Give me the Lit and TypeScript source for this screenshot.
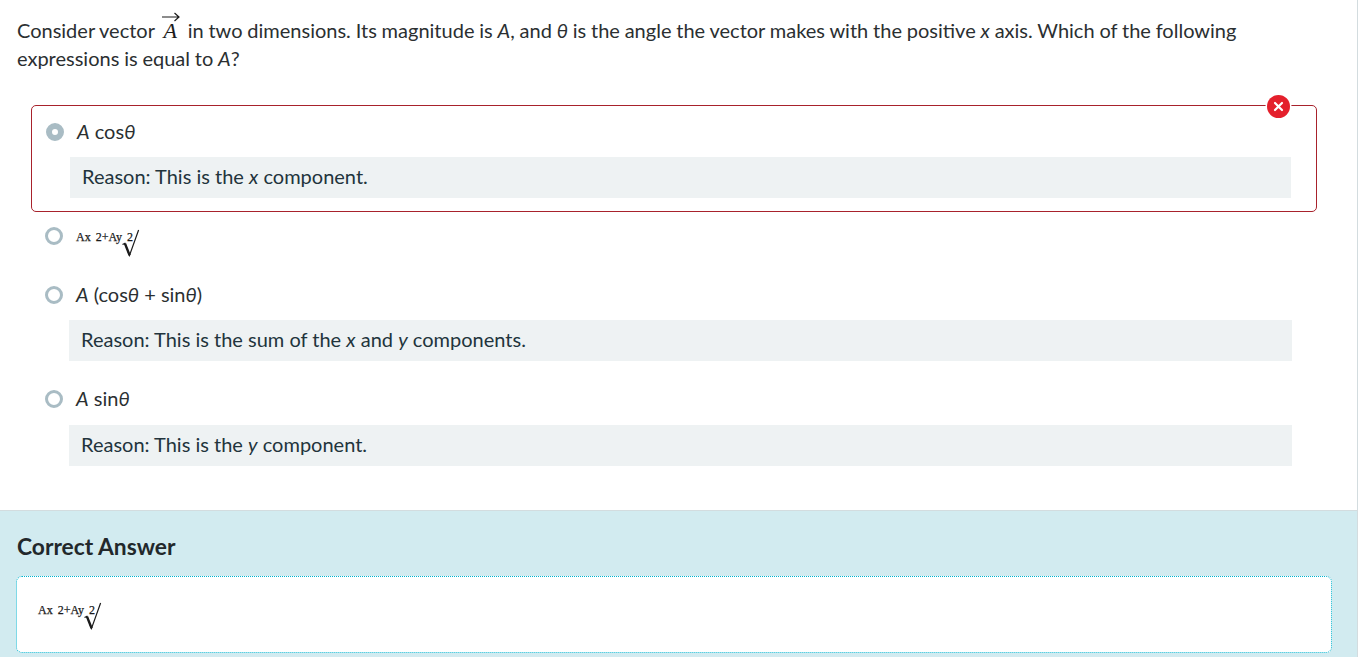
import { LitElement, html, css } from 'lit';
import { customElement, property } from 'lit/decorators.js';

const radical = html`<svg class="radical" width="18" height="28" viewBox="0 0 18 28" aria-hidden="true">
  <path d="M.5 15.5l2.4-1.1 4.6 12L16.6 1" fill="none" stroke="#1b1b1b" stroke-width="1.2" />
  <path d="M3 14.6l4.6 11.6" fill="none" stroke="#1b1b1b" stroke-width="2.4" />
</svg>`;

@customElement('math-root')
export class MathRoot extends LitElement {
  static styles = css`
    :host {
      display: inline-flex;
      align-items: flex-start;
      height: 28px;
      font-family: 'Liberation Serif', serif;
      font-size: 12px;
      line-height: 14px;
      color: #1b1b1b;
      -webkit-text-stroke: 0.25px #1b1b1b;
    }
    .expr {
      white-space: pre;
      word-spacing: 2px;
      padding-top: 2px;
    }
    .radical {
      margin: 1px 0 0 -11px;
    }
  `;

  render() {
    return html`<span class="expr">Ax 2+Ay 2</span>${radical}`;
  }
}

@customElement('answer-option')
export class AnswerOption extends LitElement {
  static styles = css`
    :host {
      display: block;
    }
    .row {
      display: flex;
      align-items: center;
      gap: 13px;
      height: 28px;
    }
    .radio {
      width: 18px;
      height: 18px;
      box-sizing: border-box;
      border-radius: 50%;
      border: 3px solid #a9bcc4;
      background: #fff;
      flex: none;
    }
    .radio--picked {
      border-width: 6.5px;
    }
    .label {
      font-size: 20px;
      line-height: 26px;
      margin-bottom: 2px;
    }
  `;

  @property({ type: Boolean }) picked = false;

  render() {
    return html`
      <div class="row">
        <span class="radio ${this.picked ? 'radio--picked' : ''}"></span>
        <span class="label"><slot></slot></span>
      </div>
    `;
  }
}

@customElement('app-root')
export class AppRoot extends LitElement {
  static styles = css`
    :host {
      display: block;
      width: 1358px;
      box-sizing: border-box;
      border-right: 1px solid #d3dcdf;
      font-family: Lato, 'Open Sans', sans-serif;
      color: #2b2f31;
    }
    .question {
      margin: 0;
      padding: 16px 100px 0 17px;
      height: 105px;
      box-sizing: border-box;
      font-size: 20px;
      line-height: 28px;
      word-spacing: -0.3px;
    }
    .vec {
      display: inline-block;
      position: relative;
      font-family: 'Liberation Serif', serif;
      font-style: italic;
      font-size: 22px;
      line-height: 18px;
      margin: 0 6px 0 4px;
      -webkit-text-stroke: 0.1px #1b1b1b;
      color: #1b1b1b;
    }
    .vec svg {
      position: absolute;
      left: -2px;
      top: -11px;
    }
    .choices {
      padding: 0 41px 44px 31px;
    }
    .wrong {
      position: relative;
      border: 1px solid #a8222c;
      border-radius: 5px;
      height: 107px;
      box-sizing: border-box;
      padding: 12px 25px 0 14px;
      margin-right: -1px;
    }
    .badge {
      position: absolute;
      top: -11px;
      right: 26px;
      width: 23px;
      height: 23px;
      border-radius: 50%;
      background: #e4202c;
      box-shadow: 0 0 0 1.5px #fff;
      display: flex;
      align-items: center;
      justify-content: center;
    }
    .plain {
      padding: 0 24px 0 14px;
    }
    .plain--root {
      padding-top: 10px;
      height: 69px;
      box-sizing: border-box;
    }
    .plain--root math-root {
      position: relative;
      top: 3px;
    }
    .plain--last {
      margin-top: 24px;
    }
    .plain--last .reason {
      margin-top: 12px;
    }
    .reason {
      margin: 11px 0 0 24px;
      background: #eef2f3;
      height: 41px;
      padding: 0 12px;
      font-size: 20px;
      line-height: 38px;
      color: #22343c;
    }
    .answer {
      background: #d2ebf0;
      border-top: 1px solid #d3dcdf;
      height: 147px;
      box-sizing: border-box;
      padding: 21px 25px 0 16px;
    }
    h2 {
      margin: 0 0 16px 1px;
      font-size: 22.8px;
      line-height: 28px;
      font-weight: 700;
      color: #22282b;
    }
    .answer-box {
      background: #fff;
      border: 1px dotted #00b4d0;
      border-radius: 6px;
      height: 77px;
      box-sizing: border-box;
      padding: 21px 21px 0;
    }
  `;

  render() {
    return html`
      <p class="question">
        Consider vector
        <span class="vec"
          ><svg width="20" height="12" viewBox="0 0 20 12" aria-hidden="true">
            <path d="M1 6h17M13.5 2l4.5 4-4.5 4" fill="none" stroke="#1b1b1b" stroke-width="1.2" /></svg
          >A</span
        >
        in two dimensions. Its magnitude is <i>A</i>, and <i>θ</i> is the angle the vector makes with the positive
        <i>x</i> axis. Which of the following expressions is equal to <i>A</i>?
      </p>
      <div class="choices">
        <div class="wrong">
          <span class="badge">
            <svg width="11" height="11" viewBox="0 0 11 11" aria-hidden="true">
              <path d="M2 2l7 7M9 2l-7 7" stroke="#fff" stroke-width="2.2" stroke-linecap="round" />
            </svg>
          </span>
          <answer-option picked><i>A</i> cos<i>θ</i></answer-option>
          <div class="reason">Reason: This is the <i>x</i> component.</div>
        </div>
        <div class="plain plain--root">
          <answer-option><math-root></math-root></answer-option>
        </div>
        <div class="plain">
          <answer-option><i>A</i> (cos<i>θ</i> + sin<i>θ</i>)</answer-option>
          <div class="reason">Reason: This is the sum of the <i>x</i> and <i>y</i> components.</div>
        </div>
        <div class="plain plain--last">
          <answer-option><i>A</i> sin<i>θ</i></answer-option>
          <div class="reason">Reason: This is the <i>y</i> component.</div>
        </div>
      </div>
      <section class="answer">
        <h2>Correct Answer</h2>
        <div class="answer-box"><math-root></math-root></div>
      </section>
    `;
  }
}
